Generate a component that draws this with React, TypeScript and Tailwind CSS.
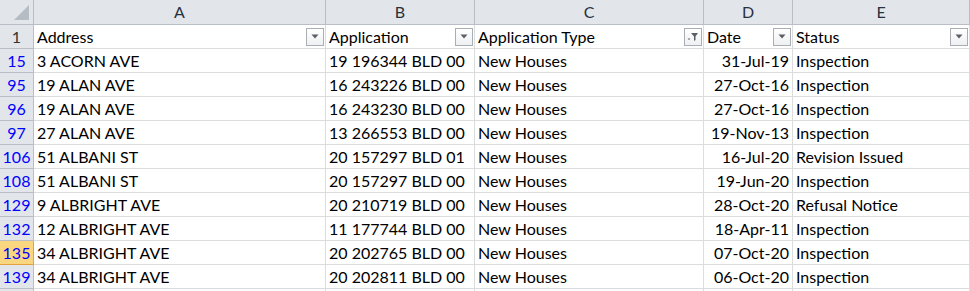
import * as React from "react";

type Row = {
  num: string;
  address: string;
  app: string;
  type: string;
  date: string;
  status: string;
  active?: boolean;
};

const ROWS: Row[] = [
  { num: "15", address: "3 ACORN AVE", app: "19 196344 BLD 00", type: "New Houses", date: "31-Jul-19", status: "Inspection" },
  { num: "95", address: "19 ALAN AVE", app: "16 243226 BLD 00", type: "New Houses", date: "27-Oct-16", status: "Inspection" },
  { num: "96", address: "19 ALAN AVE", app: "16 243230 BLD 00", type: "New Houses", date: "27-Oct-16", status: "Inspection" },
  { num: "97", address: "27 ALAN AVE", app: "13 266553 BLD 00", type: "New Houses", date: "19-Nov-13", status: "Inspection" },
  { num: "106", address: "51 ALBANI ST", app: "20 157297 BLD 01", type: "New Houses", date: "16-Jul-20", status: "Revision Issued" },
  { num: "108", address: "51 ALBANI ST", app: "20 157297 BLD 00", type: "New Houses", date: "19-Jun-20", status: "Inspection" },
  { num: "129", address: "9 ALBRIGHT AVE", app: "20 210719 BLD 00", type: "New Houses", date: "28-Oct-20", status: "Refusal Notice" },
  { num: "132", address: "12 ALBRIGHT AVE", app: "11 177744 BLD 00", type: "New Houses", date: "18-Apr-11", status: "Inspection" },
  { num: "135", address: "34 ALBRIGHT AVE", app: "20 202765 BLD 00", type: "New Houses", date: "07-Oct-20", status: "Inspection", active: true },
  { num: "139", address: "34 ALBRIGHT AVE", app: "20 202811 BLD 00", type: "New Houses", date: "06-Oct-20", status: "Inspection" },
];

const COLS = "grid-cols-[34px_292px_149px_229px_89px_1fr]";

function FilterButton({ filtered }: { filtered?: boolean }) {
  return (
    <span className="flex h-[18px] w-[18px] shrink-0 items-center justify-center border border-[#a9aeb5] bg-gradient-to-b from-white to-[#eef0f3]">
      {filtered ? (
        <svg width="12" height="10" viewBox="0 0 12 10" aria-hidden>
          <path d="M4 1h7L8.5 4.5V8L7 9V4.5z" fill="#5b5f66" />
          <path d="M0.5 6.5h3L2 8z" fill="#5b5f66" />
        </svg>
      ) : (
        <svg width="8" height="5" viewBox="0 0 8 5" aria-hidden>
          <path d="M0.5 0.5h7L4 4.5z" fill="#5b5f66" />
        </svg>
      )}
    </span>
  );
}

function HeaderCell({ label, filtered }: { label: string; filtered?: boolean }) {
  return (
    <div className="flex h-[24px] items-center justify-between border-b border-r border-[#dadcdd] bg-white pl-[3px] pr-[1px]">
      <span>{label}</span>
      <FilterButton filtered={filtered} />
    </div>
  );
}

export default function App() {
  const cell = "h-[24px] flex items-center border-b border-r border-[#dadcdd] bg-white px-[3px] whitespace-nowrap overflow-hidden";

  return (
    <div className="h-[291px] w-[970px] overflow-hidden bg-white font-['Lato','Liberation_Sans',sans-serif] text-[16px] leading-none text-black">
      <div className={`grid ${COLS}`}>
        {/* column letters */}
        <div className="relative h-[25px] border-b border-r border-[#b9bec6] bg-[#e2e6eb]">
          <svg className="absolute bottom-[4px] right-[4px]" width="15" height="15" viewBox="0 0 15 15" aria-hidden>
            <path d="M15 0V15H0z" fill="#b6bcc4" />
          </svg>
        </div>
        {["A", "B", "C", "D", "E"].map((l) => (
          <div
            key={l}
            className="flex h-[25px] items-center justify-center border-b border-r border-[#b9bec6] bg-[#e2e6eb] text-[#27313d]"
          >
            {l}
          </div>
        ))}

        {/* header row */}
        <div className="flex h-[24px] items-center justify-center border-b border-r border-[#b9bec6] bg-[#e2e6eb] text-[#333]">
          1
        </div>
        <HeaderCell label="Address" />
        <HeaderCell label="Application" />
        <HeaderCell label="Application Type" filtered />
        <HeaderCell label="Date" />
        <HeaderCell label="Status" />

        {ROWS.map((r) => (
          <React.Fragment key={r.num}>
            <div
              className={
                r.active
                  ? "flex h-[24px] items-center justify-center border-b border-r border-[#e4a33c] bg-[#fbd680] text-[#0000ff]"
                  : "flex h-[24px] items-center justify-center border-b border-r border-[#b9bec6] bg-[#e2e6eb] text-[#0000ff]"
              }
            >
              {r.num}
            </div>
            <div className={cell}>{r.address}</div>
            <div className={cell}>{r.app}</div>
            <div className={cell}>{r.type}</div>
            <div className={`${cell} justify-end`}>{r.date}</div>
            <div className={cell}>{r.status}</div>
          </React.Fragment>
        ))}

        <div className="h-[24px] border-r border-[#b9bec6] bg-[#e2e6eb]" />
        <div className={cell} />
        <div className={cell} />
        <div className={cell} />
        <div className={cell} />
        <div className={cell} />
      </div>
    </div>
  );
}
